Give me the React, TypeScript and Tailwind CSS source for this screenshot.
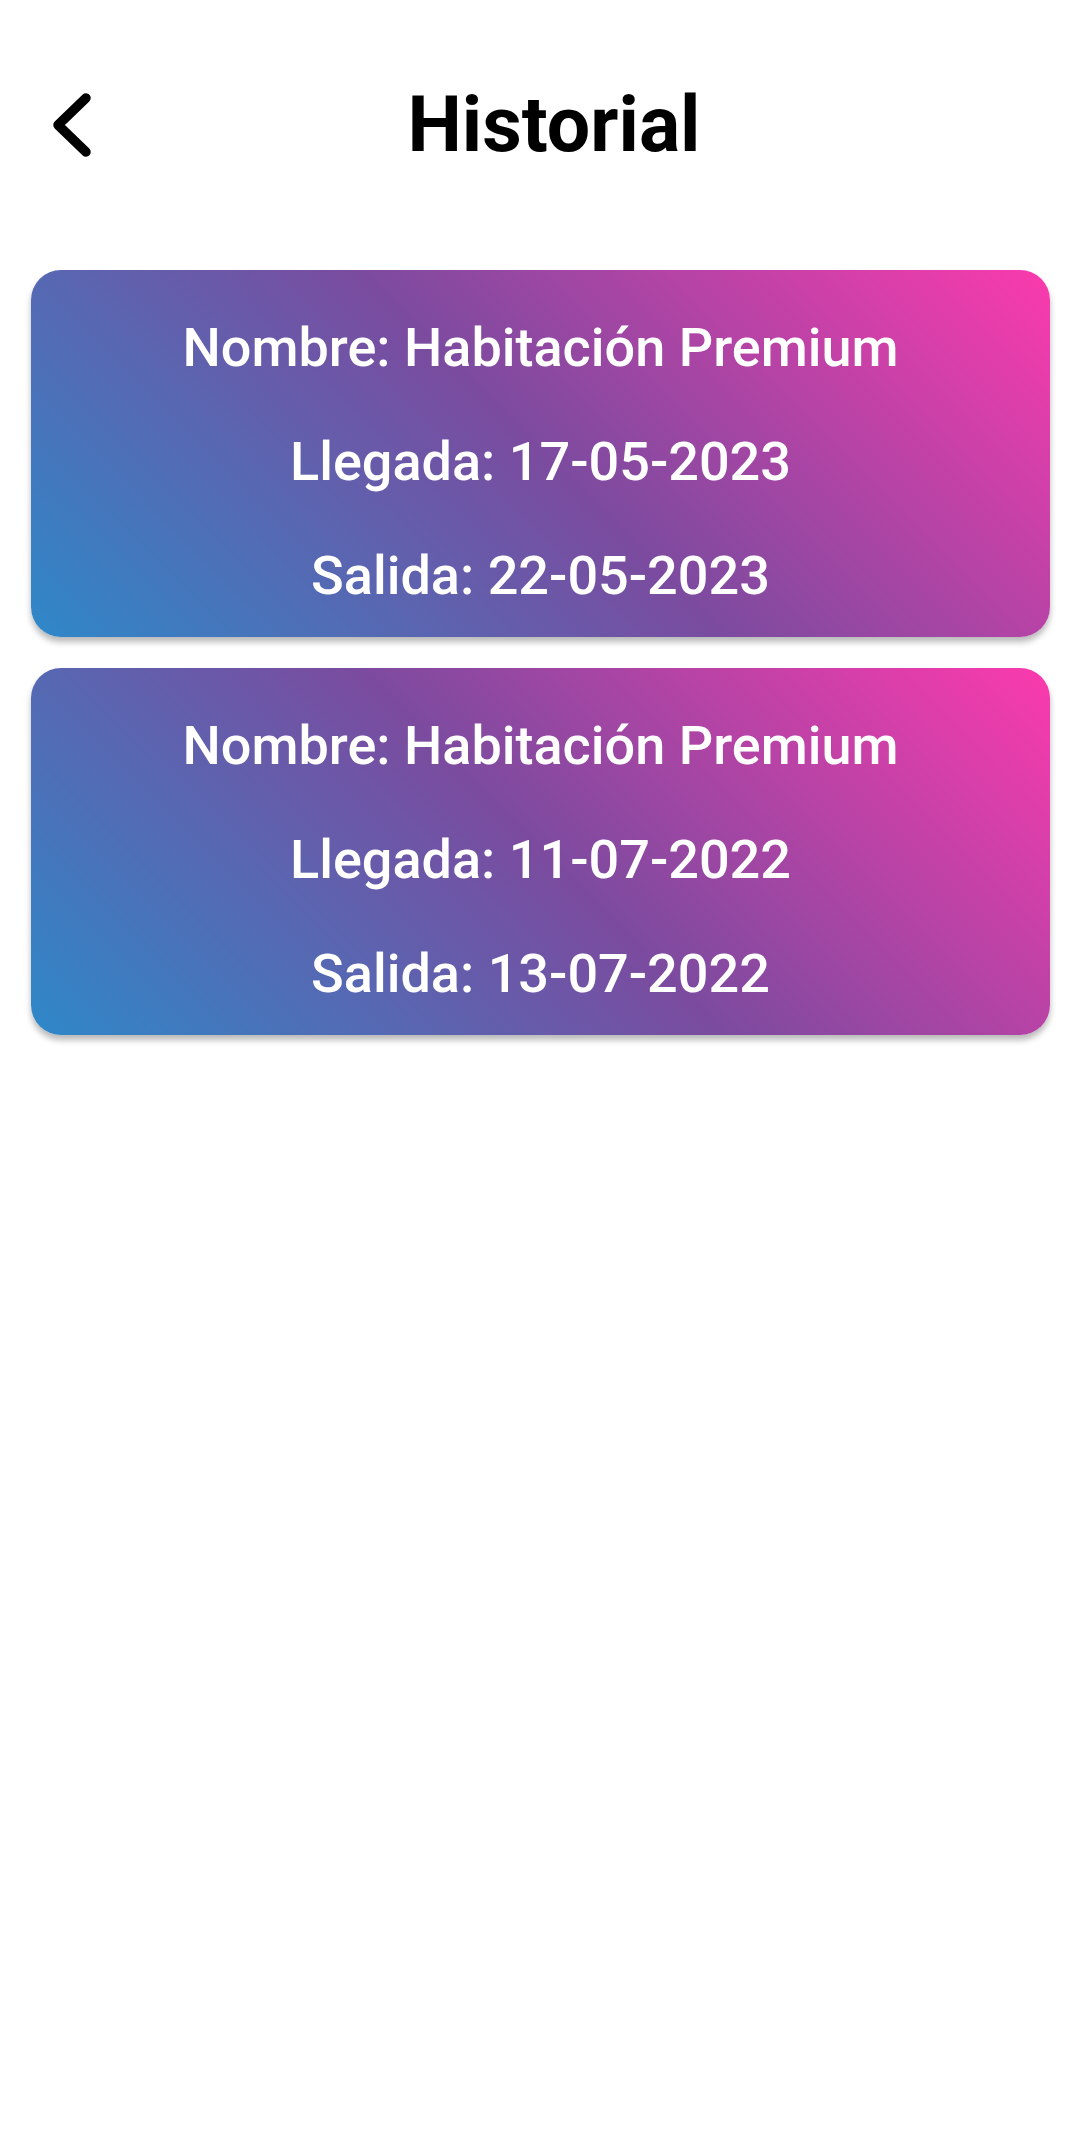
import React from "react";

const items = [
  { nombre: "Habitación Premium", llegada: "17-05-2023", salida: "22-05-2023" },
  { nombre: "Habitación Premium", llegada: "11-07-2022", salida: "13-07-2022" },
];

export default function App() {
  return (
    <div className="min-h-[2156px] w-[1080px] bg-white" style={{ fontFamily: "Roboto, 'Noto Sans', sans-serif" }}>
      <div className="flex items-center pt-[80px]">
        <div className="w-[120px] pl-[50px] flex items-center">
          <svg width="46" height="66" viewBox="0 0 46 66" fill="none">
            <path d="M36 6 L8 33 L36 60" stroke="#000" strokeWidth="9.5" strokeLinecap="round" strokeLinejoin="round" />
          </svg>
        </div>
        <h1 className="flex-1 text-center pr-[92px] text-[77px] leading-[90px] font-bold text-black">Historial</h1>
      </div>
      <div className="mt-[100px] flex flex-col gap-[31px] pl-[31px] pr-[30px]">
        {items.map((it, i) => (
          <div
            key={i}
            className="rounded-[30px] bg-[linear-gradient(45deg,#2e88c8,#7b4b9f,#fb3aad)] shadow-[0_5px_6px_rgba(0,0,0,0.28)] pt-[46px] pb-[30px] flex flex-col items-center gap-[51px] text-white text-[54px] leading-[63px] font-medium"
          >
            <p>Nombre: {it.nombre}</p>
            <p>Llegada: {it.llegada}</p>
            <p>Salida: {it.salida}</p>
          </div>
        ))}
      </div>
    </div>
  );
}
